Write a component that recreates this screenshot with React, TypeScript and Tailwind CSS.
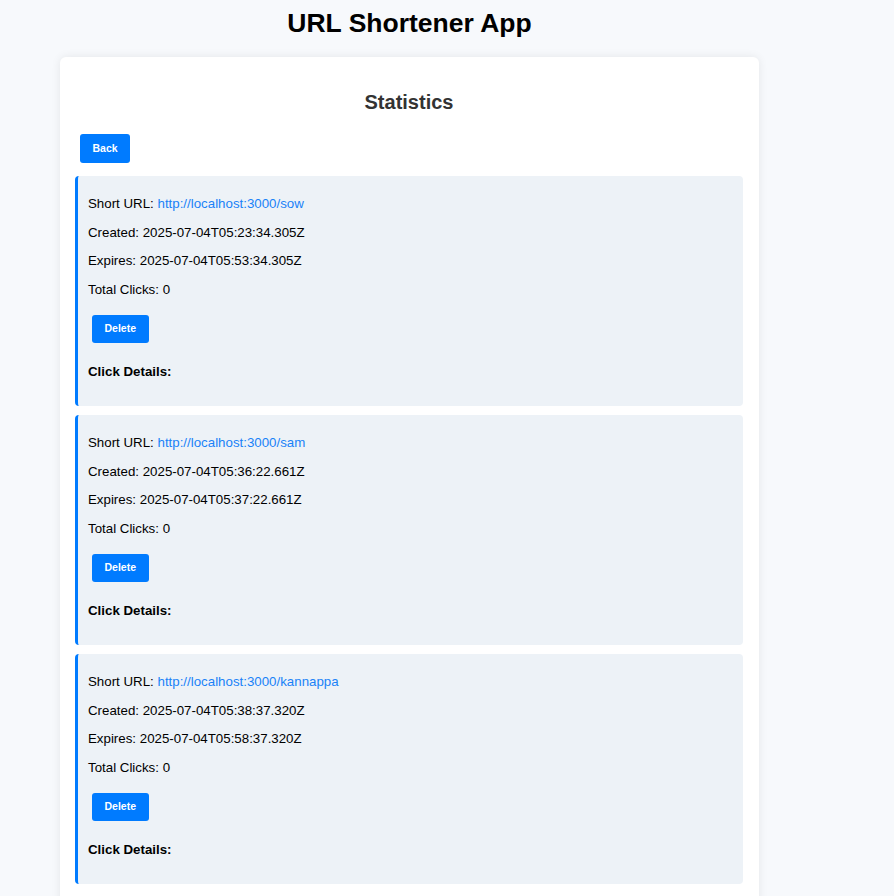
const links = [
  {
    code: 'sow',
    created: '2025-07-04T05:23:34.305Z',
    expires: '2025-07-04T05:53:34.305Z',
    clicks: 0,
  },
  {
    code: 'sam',
    created: '2025-07-04T05:36:22.661Z',
    expires: '2025-07-04T05:37:22.661Z',
    clicks: 0,
  },
  {
    code: 'kannappa',
    created: '2025-07-04T05:38:37.320Z',
    expires: '2025-07-04T05:58:37.320Z',
    clicks: 0,
  },
];

function StatItem({ item }: { item: (typeof links)[number] }) {
  const url = `http://localhost:3000/${item.code}`;
  return (
    <div className="rounded-[4px] border-l-[3px] border-[#007bff] bg-[#edf2f7] pl-[10px] pt-[20px] pb-[26px]">
      <div className="flex flex-col gap-[12.5px] text-[13.3px] leading-[16px] text-black">
        <p>
          Short URL:{' '}
          <a href={url} className="text-[#1a82f7]">
            {url}
          </a>
        </p>
        <p>Created: {item.created}</p>
        <p>Expires: {item.expires}</p>
        <p>Total Clicks: {item.clicks}</p>
      </div>
      <button className="mt-[17.5px] ml-[4px] h-[28px] rounded-[3px] bg-[#007bff] px-[12.5px] text-[10.5px] font-bold text-white">
        Delete
      </button>
      <h4 className="mt-[21px] text-[13.3px] font-bold leading-[16px] text-black">Click Details:</h4>
    </div>
  );
}

export default function App() {
  return (
    <div className="min-h-screen bg-[#f7f9fc] pb-10 font-['Liberation_Sans',Arial,sans-serif]">
      <div className="w-[819px] pt-[7px]">
        <h1 className="text-center text-[26.5px] font-bold leading-[32px] text-black">URL Shortener App</h1>
        <div className="mx-auto mt-[18px] w-[699px] rounded-[6px] bg-white pl-[15px] pr-[16px] pt-[33px] pb-[40px] shadow-[0_0_10px_rgba(0,0,0,0.08)]">
          <h2 className="text-center text-[20px] font-bold leading-[24px] text-[#333]">Statistics</h2>
          <button className="mt-[20px] ml-[5px] h-[29px] rounded-[3px] bg-[#007bff] px-[12.5px] text-[10.5px] font-bold text-white">
            Back
          </button>
          <div className="mt-[13px] flex flex-col gap-[9px]">
            {links.map((l) => (
              <StatItem key={l.code} item={l} />
            ))}
          </div>
        </div>
      </div>
    </div>
  );
}
